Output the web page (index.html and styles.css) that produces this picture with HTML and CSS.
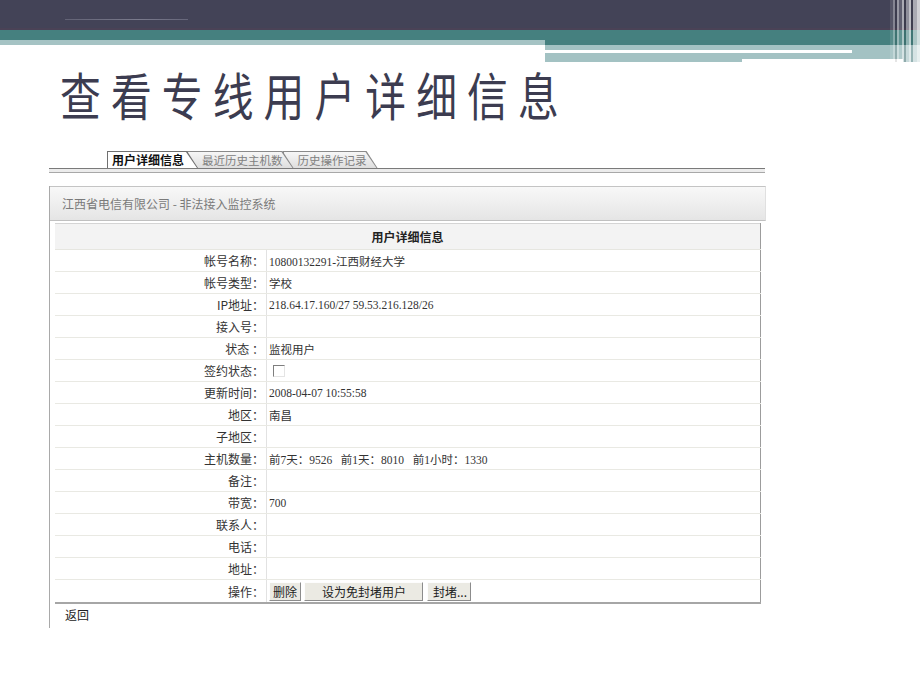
FILE: index.html
```html
<!DOCTYPE html>
<html lang="zh-CN">
<head>
<meta charset="utf-8">
<title>查看专线用户详细信息</title>
<link rel="stylesheet" href="styles.css">
</head>
<body>
<div class="topbar">
  <div class="band band-left">
    <div class="dark"><div class="tinytext"></div></div>
    <div class="teal"></div>
    <div class="pale"></div>
  </div>
  <div class="band band-right">
    <div class="dark"></div>
    <div class="teal"></div>
    <div class="pale">
      <div class="wline"></div>
      <div class="notch"></div>
    </div>
  </div>
  <div class="stripes"></div>
</div>

<h1 class="title"><span>查看专线用户详细信息</span></h1>

<div class="tabs">
  <div class="tab active"><span>用户详细信息</span></div>
  <div class="tab second"><span>最近历史主机数</span></div>
  <div class="tab third"><span>历史操作记录</span></div>
</div>
<div class="tabline"></div>

<div class="panel">
  <div class="panel-head">江西省电信有限公司 - 非法接入监控系统</div>
  <table class="detail">
    <tr class="head"><th colspan="2">用户详细信息</th></tr>
    <tr><td class="lab">帐号名称：</td><td class="val">10800132291-江西财经大学</td></tr>
    <tr><td class="lab">帐号类型：</td><td class="val">学校</td></tr>
    <tr><td class="lab">IP地址：</td><td class="val">218.64.17.160/27 59.53.216.128/26</td></tr>
    <tr><td class="lab">接入号：</td><td class="val"></td></tr>
    <tr><td class="lab">状态 ：</td><td class="val">监视用户</td></tr>
    <tr><td class="lab">签约状态：</td><td class="val"><span class="check"></span></td></tr>
    <tr><td class="lab">更新时间：</td><td class="val">2008-04-07 10:55:58</td></tr>
    <tr><td class="lab">地区：</td><td class="val">南昌</td></tr>
    <tr><td class="lab">子地区：</td><td class="val"></td></tr>
    <tr><td class="lab">主机数量：</td><td class="val">前7天：9526&nbsp;&nbsp; 前1天：8010&nbsp;&nbsp; 前1小时：1330</td></tr>
    <tr><td class="lab">备注：</td><td class="val"></td></tr>
    <tr><td class="lab">带宽：</td><td class="val">700</td></tr>
    <tr><td class="lab">联系人：</td><td class="val"></td></tr>
    <tr><td class="lab">电话：</td><td class="val"></td></tr>
    <tr><td class="lab">地址：</td><td class="val"></td></tr>
    <tr><td class="lab">操作：</td><td class="val"><div class="btns"><button class="btn">删除</button><button class="btn wide">设为免封堵用户</button><button class="btn more">封堵...</button></div></td></tr>
  </table>
  <div class="back">返回</div>
</div>
</body>
</html>
```

FILE: styles.css
```css
html, body {
  margin: 0;
  padding: 0;
  background: #ffffff;
}
body {
  font-family: "Liberation Serif", "Noto Sans CJK JP", serif;
  font-size: 12px;
  color: #222;
}

/* ---------- top decorative bands ---------- */
.topbar {
  position: relative;
  display: flex;
  height: 62px;
}
.band {
  display: flex;
  flex-direction: column;
}
.band-left { width: 545px; }
.band-right { flex: 1; }
.dark {
  height: 30px;
  background: #434357;
  box-shadow: inset 0 -2px 0 #4a4256;
}
.tinytext {
  margin: 19px 0 0 65px;
  width: 123px;
  height: 1px;
  background: linear-gradient(90deg, #626275, #7a7a8c 60%, #66667a);
}
.band-left .teal { height: 10px; background: #45807f; }
.band-left .pale { height: 5px; background: #a5c3c4; }
.band-right .teal { height: 15px; background: #45807f; }
.band-right .pale {
  height: 17px;
  background: #a3c2c3;
  display: flex;
  flex-direction: column;
}
.wline {
  margin-top: 5px;
  width: 307px;
  height: 3px;
  background: #ffffff;
}
.notch {
  margin: 6px 0 0 197px;
  width: 161px;
  height: 3px;
  background: #ffffff;
}
.stripes {
  position: absolute;
  right: 0;
  top: 0;
  width: 30px;
  height: 62px;
  background: linear-gradient(90deg,
    rgba(255,255,255,0.10) 0 3px,
    rgba(255,255,255,0.35) 3px 5px,
    rgba(0,0,0,0.10) 5px 7px,
    rgba(255,255,255,0.45) 7px 9px,
    rgba(255,255,255,0.15) 9px 12px,
    rgba(255,255,255,0.55) 12px 14px,
    rgba(0,0,0,0.12) 14px 16px,
    rgba(255,255,255,0.40) 16px 19px,
    rgba(255,255,255,0.65) 19px 21px,
    rgba(0,0,0,0.08) 21px 23px,
    rgba(255,255,255,0.55) 23px 27px,
    rgba(255,255,255,0.75) 27px 30px);
}

/* ---------- title ---------- */
.title {
  margin: 2px 0 0 0;
  padding-left: 60px;
  height: 60px;
  line-height: 60px;
  font-family: "Noto Sans CJK SC", sans-serif;
  font-weight: 400;
  font-size: 51px;
  color: #3c3c50;
  white-space: nowrap;
}
.title span {
  display: inline-block;
  letter-spacing: 12.6px;
  transform: scaleX(0.8);
  transform-origin: 0 50%;
}

/* ---------- tabs ---------- */
.tabs {
  display: flex;
  margin: 27px 0 0 107px;
  height: 17px;
}
.tab {
  position: relative;
  box-sizing: border-box;
  height: 17px;
  padding: 1px 1px 0 1px;
  background: #8a8a8a;
  clip-path: polygon(0 0, calc(100% - 11px) 0, 100% 100%, 0 100%);
}
.tab span {
  display: block;
  height: 16px;
  line-height: 16px;
  padding: 0 10px 0 14px;
  font-family: "Noto Sans CJK SC", sans-serif;
  font-size: 11.5px;
  color: #808080;
  white-space: nowrap;
  background: linear-gradient(#f6f6f6, #dedede);
  clip-path: polygon(0 0, calc(100% - 11px) 0, 100% 100%, 0 100%);
}
.tab.active { z-index: 3; background: #707070; }
.tab.active span {
  padding: 0 13px 0 4px;
  font-size: 12px;
  font-weight: 700;
  color: #111;
  background: #ffffff;
}
.tab.second { z-index: 2; margin-left: -11px; }
.tab.third { z-index: 1; margin-left: -11px; }
.tabline {
  margin-left: 49px;
  width: 716px;
  height: 3px;
  border-top: 1px solid #7a7a7a;
  border-bottom: 1px solid #a8a8a8;
  background: #ececec;
}

/* ---------- panel ---------- */
.panel {
  margin: 13px 0 0 49px;
  width: 716px;
  border-left: 1px solid #a9a9a9;
  padding-bottom: 2px;
}
.panel-head {
  height: 33px;
  line-height: 33px;
  padding-left: 12px;
  border-top: 1px solid #c4c4c4;
  border-right: 1px solid #e0e0e0;
  border-bottom: 1px solid #c0c0c0;
  background: linear-gradient(#f8f8f8, #e5e5e5);
  font-family: "Noto Sans CJK SC", sans-serif;
  font-size: 12px;
  color: #7a7a7a;
}
.detail {
  margin: 2px 0 0 5px;
  width: 706px;
  border-collapse: collapse;
  border-top: 1px solid #d4d4d4;
  border-right: 1px solid #9c9c9c;
  border-bottom: 2px solid #a6a6a6;
}
.detail th {
  height: 25px;
  padding: 0;
  background: #f3f3f3;
  border-bottom: 1px solid #e6e6e0;
  font-family: "Noto Sans CJK SC", sans-serif;
  font-weight: 700;
  font-size: 12px;
  color: #222;
  text-align: center;
}
.detail td {
  height: 21px;
  padding: 0;
  border-bottom: 1px solid #e9e9e3;
  white-space: nowrap;
}
.detail tr:last-child td { border-bottom: none; height: 22px; }
.lab {
  width: 209px;
  padding-right: 2px !important;
  text-align: right;
  border-right: 1px solid #e2e2e2;
  font-family: "Noto Sans CJK JP", sans-serif;
  font-size: 12px;
  color: #333;
}
.val {
  padding-left: 2px !important;
  font-size: 11.5px;
  color: #333;
}
.check {
  display: inline-block;
  vertical-align: middle;
  margin-left: 4px;
  width: 10px;
  height: 10px;
  border-top: 1px solid #7e7e7e;
  border-left: 1px solid #7e7e7e;
  border-right: 1px solid #e4e4e4;
  border-bottom: 1px solid #e4e4e4;
  background: #ffffff;
}
.btns {
  display: flex;
  gap: 3px;
  align-items: center;
}
.btn {
  box-sizing: border-box;
  height: 19px;
  margin: 0;
  padding: 0 3px;
  font-family: "Noto Sans CJK SC", sans-serif;
  font-size: 12px;
  line-height: 17px;
  color: #222;
  background: #ebeae3;
  border: 1px solid;
  border-color: #fdfdfd #8c8c8c #8c8c8c #fdfdfd;
  border-radius: 0;
}
.btn.wide { padding: 0 17px; width: 119px; }
.btn.more { padding: 0 5px; width: 44px; margin-left: 1px; }
.back {
  height: 22px;
  line-height: 22px;
  padding-left: 15px;
  font-family: "Noto Sans CJK SC", sans-serif;
  font-size: 12px;
  color: #222;
}
```
